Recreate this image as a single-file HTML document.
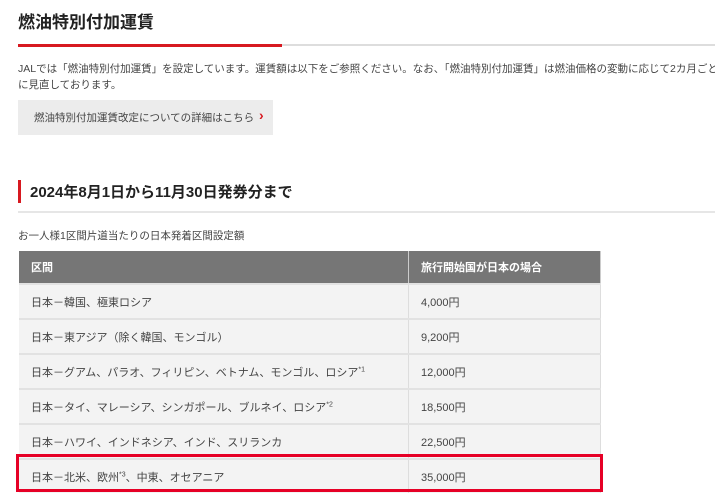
<!DOCTYPE html>
<html><head><meta charset="utf-8"><style>
body{margin:0;width:715px;height:500px;overflow:hidden;background:#fff;font-family:"Liberation Sans","Noto Sans CJK JP",sans-serif;color:#333;position:relative}
.a{position:absolute;white-space:nowrap}
h1{position:absolute;left:18px;top:8px;margin:0;font-size:17px;font-weight:bold;color:#222}
.p{font-size:10.5px;left:18px;color:#444}
table{position:absolute;left:19px;top:251px;width:582px;border-collapse:collapse;font-size:11px;color:#444}
th{background:#767676;color:#fff;text-align:left;font-weight:bold;height:32px;padding:0 0 0 12px;border-right:1px solid #ccc}
td{background:#f3f3f3;height:33px;padding:0 0 0 12px;border-top:2px solid #e2e2e2;border-right:1px solid #ddd}
sup{font-size:7px}
</style></head><body>
<h1>燃油特別付加運賃</h1>
<div class="a" style="left:18px;top:44px;width:697px;height:2px;background:#ddd"></div>
<div class="a" style="left:18px;top:44px;width:264px;height:3px;background:#d71920"></div>
<div class="a p" style="top:61px">JALでは「燃油特別付加運賃」を設定しています。運賃額は以下をご参照ください。なお、「燃油特別付加運賃」は燃油価格の変動に応じて2カ月ごと</div>
<div class="a p" style="top:77px">に見直しております。</div>
<div class="a" style="left:18px;top:100px;width:255px;height:35px;background:#ececec"></div>
<div class="a p" style="left:34px;top:110px">燃油特別付加運賃改定についての詳細はこちら</div>
<div class="a" style="left:259px;top:107px;color:#d71920;font-size:14px;font-weight:bold">›</div>
<div class="a" style="left:18px;top:180px;width:3px;height:23px;background:#d71920"></div>
<div class="a" style="left:30px;top:181px;font-size:15px;font-weight:bold;color:#222">2024年8月1日から11月30日発券分まで</div>
<div class="a" style="left:18px;top:211px;width:697px;height:2px;background:#e6e6e6"></div>
<div class="a p" style="top:228px">お一人様1区間片道当たりの日本発着区間設定額</div>
<table>
<tr><th style="width:377px">区間</th><th>旅行開始国が日本の場合</th></tr>
<tr><td>日本－韓国、極東ロシア</td><td>4,000円</td></tr>
<tr><td>日本－東アジア（除く韓国、モンゴル）</td><td>9,200円</td></tr>
<tr><td>日本－グアム、パラオ、フィリピン、ベトナム、モンゴル、ロシア<sup>*1</sup></td><td>12,000円</td></tr>
<tr><td>日本－タイ、マレーシア、シンガポール、ブルネイ、ロシア<sup>*2</sup></td><td>18,500円</td></tr>
<tr><td>日本－ハワイ、インドネシア、インド、スリランカ</td><td>22,500円</td></tr>
<tr><td>日本－北米、欧州<sup>*3</sup>、中東、オセアニア</td><td>35,000円</td></tr>
</table>
<div class="a" style="left:16px;top:454px;width:581px;height:32px;border:3px solid #e60026"></div>
</body></html>
